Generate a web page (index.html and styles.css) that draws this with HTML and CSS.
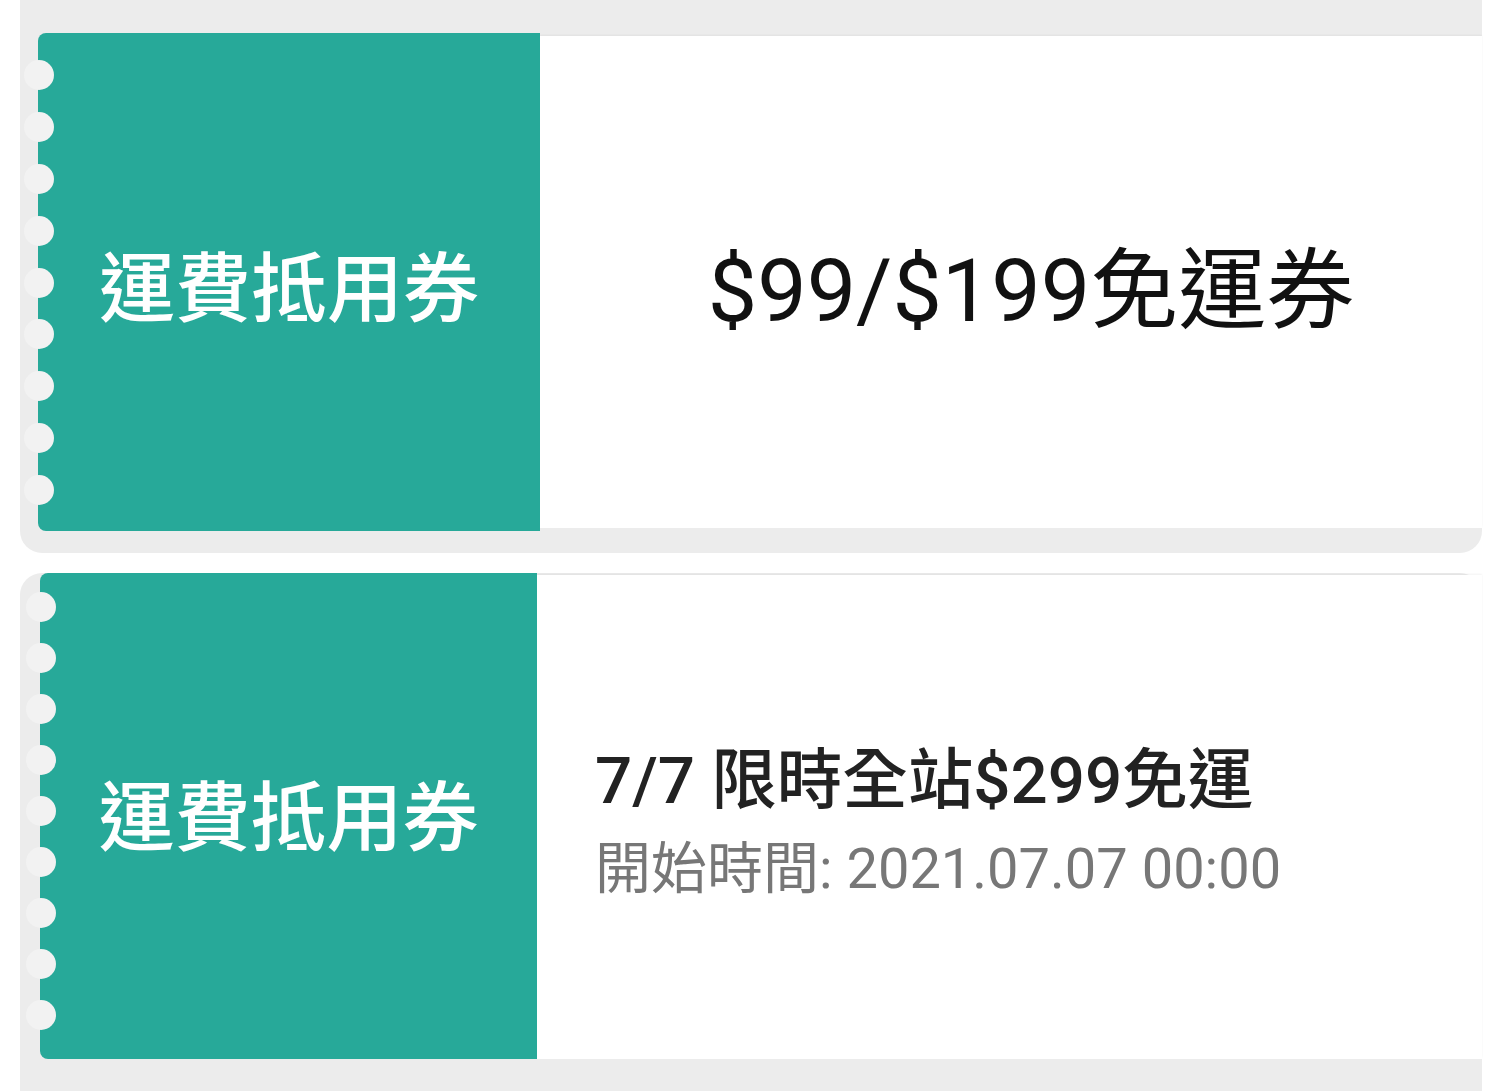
FILE: index.html
```html
<!DOCTYPE html>
<html lang="zh-Hant">
<head>
<meta charset="utf-8">
<title>運費抵用券</title>
<link rel="stylesheet" href="styles.css">
</head>
<body>
<div class="list">
  <div class="card card--first">
    <div class="stub stub--first">
      <div class="notches notches--first">
        <span class="notch"></span><span class="notch"></span><span class="notch"></span>
        <span class="notch"></span><span class="notch"></span><span class="notch"></span>
        <span class="notch"></span><span class="notch"></span><span class="notch"></span>
      </div>
      <span class="stub-label">運費抵用券</span>
    </div>
    <div class="body body--center">
      <div class="title-big">$99/$199免運券</div>
    </div>
  </div>
  <div class="card card--second">
    <div class="stub stub--second">
      <div class="notches notches--second">
        <span class="notch"></span><span class="notch"></span><span class="notch"></span>
        <span class="notch"></span><span class="notch"></span><span class="notch"></span>
        <span class="notch"></span><span class="notch"></span><span class="notch"></span>
      </div>
      <span class="stub-label">運費抵用券</span>
    </div>
    <div class="body body--left">
      <div class="title">7/7 限時全站$299免運</div>
      <div class="subtitle">開始時間: 2021.07.07 00:00</div>
    </div>
  </div>
</div>
</body>
</html>
```
FILE: styles.css
```css
html, body {
  margin: 0;
  padding: 0;
  background: #ffffff;
}
body {
  height: 1091px;
  overflow: hidden;
  font-family: Roboto, "Noto Sans CJK TC", "Noto Sans", sans-serif;
}
.list {
  display: flex;
  flex-direction: column;
  gap: 20px;
  margin-left: 20px;
  width: 1462px;
}
.card {
  display: flex;
  background: #ececec;
}
.card--first {
  padding: 33px 0 22px 18px;
  border-radius: 0 0 22px 22px;
}
.card--second {
  padding: 0 0 40px 20px;
  border-radius: 22px 22px 0 0;
}
.stub {
  position: relative;
  flex: none;
  display: flex;
  align-items: center;
  justify-content: center;
  background: #27a999;
  border-radius: 8px 0 0 8px;
  color: #ffffff;
}
.stub--first {
  width: 502px;
  height: 498px;
}
.stub--second {
  width: 497px;
  height: 486px;
}
.stub-label {
  font-family: "Noto Sans CJK TC", sans-serif;
  font-size: 76px;
  font-weight: 500;
  line-height: 1;
  letter-spacing: 0;
}
.stub--first .stub-label {
  padding-top: 2px;
}
.stub--second .stub-label {
  padding-bottom: 8px;
}
.notches {
  position: absolute;
  left: -14px;
  display: flex;
  flex-direction: column;
  justify-content: space-between;
}
.notches--first {
  top: 27px;
  bottom: 26px;
}
.notches--second {
  top: 19px;
  bottom: 29px;
}
.notch {
  display: block;
  width: 30px;
  height: 30px;
  border-radius: 50%;
  background: #f2f2f2;
}
.body {
  flex: 1;
  background: #ffffff;
  display: flex;
  flex-direction: column;
  justify-content: center;
  box-shadow: 0 -1px 2px rgba(0, 0, 0, 0.05);
}
.card--first .body {
  margin: 3px 0;
}
.card--second .body {
  margin-top: 2px;
}
.body--center {
  align-items: center;
  padding-left: 40px;
}
.body--left {
  align-items: flex-start;
  padding-left: 58px;
}
.title-big {
  font-size: 88px;
  font-weight: 400;
  color: #111111;
  line-height: 1.2;
  padding-top: 18px;
}
.title {
  font-size: 65.5px;
  font-weight: 500;
  color: #222222;
  line-height: 1.3;
  padding-top: 8px;
}
.subtitle {
  font-size: 56px;
  font-weight: 400;
  color: #777777;
  line-height: 1.25;
  margin-top: 11px;
}
```
